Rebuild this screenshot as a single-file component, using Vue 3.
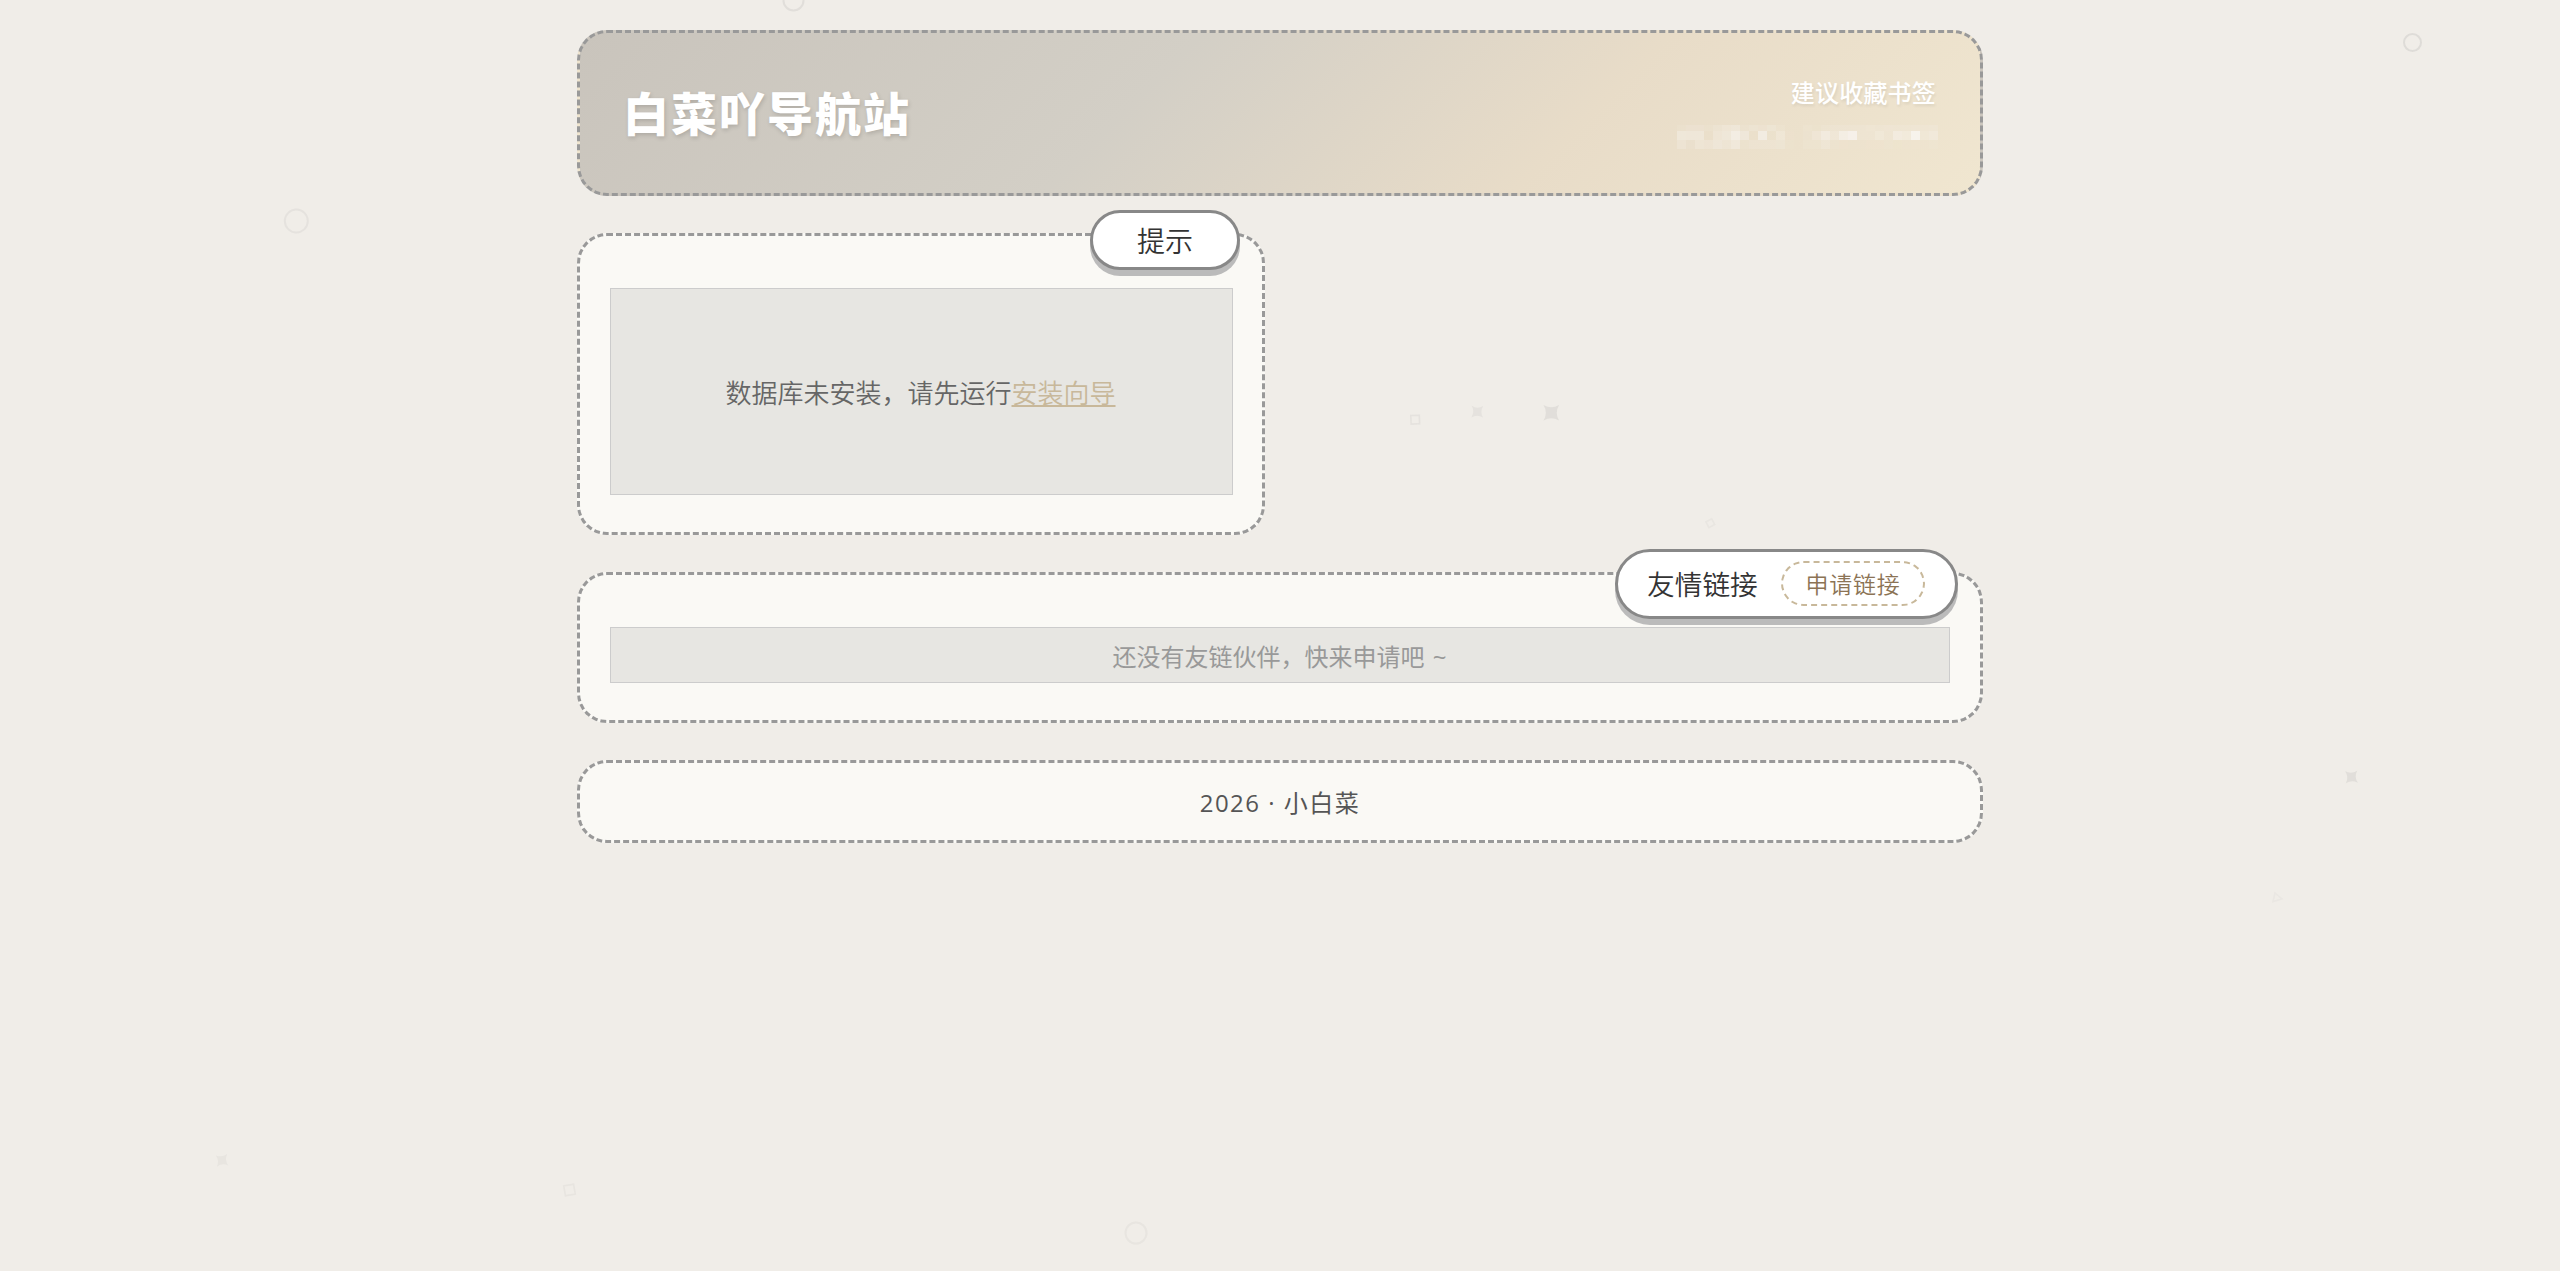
<template>
  <div class="page">
    <!-- Background shapes -->
    <svg class="shapes" width="2560" height="1271" viewBox="0 0 2560 1271" aria-hidden="true">
      <circle
        v-for="(c, i) in circles"
        :key="'c' + i"
        :cx="c.x"
        :cy="c.y"
        :r="c.r"
        :opacity="c.opacity"
        class="outline"
      />
      <rect
        v-for="(s, i) in squares"
        :key="'s' + i"
        :x="-s.size / 2"
        :y="-s.size / 2"
        :width="s.size"
        :height="s.size"
        :transform="`translate(${s.x} ${s.y}) rotate(${s.rotate})`"
        :opacity="s.opacity"
        class="outline thin"
      />
      <path
        v-for="(s, i) in stars"
        :key="'t' + i"
        d="M-10 -10Q0 -4 10 -10Q4 0 10 10Q0 4 -10 10Q-4 0 -10 -10Z"
        :transform="`translate(${s.x} ${s.y}) rotate(${s.rotate}) scale(${s.scale})`"
        :opacity="s.opacity"
        class="solid"
      />
      <path d="M2275 893L2282 899L2273 901.500Z" opacity="0.05" class="outline thin" />
    </svg>

    <div class="container">
      <header class="header">
        <h1 class="site-title">白菜吖导航站</h1>
        <div class="header-info">
          <p class="info-line">建议收藏书签</p>
          <div class="mosaic">
            <span
              v-for="(alpha, i) in mosaic"
              :key="i"
              :style="{ backgroundColor: `rgba(247, 244, 240, ${alpha})` }"
            ></span>
          </div>
        </div>
      </header>

      <section class="card tip-card">
        <div class="card-label">提示</div>
        <div class="panel tip-panel">
          <p>数据库未安装，请先运行<a href="#" class="link">安装向导</a></p>
        </div>
      </section>

      <section class="card">
        <div class="card-label links-label">
          <span>友情链接</span>
          <a href="#" class="apply-btn">申请链接</a>
        </div>
        <div class="panel links-panel">还没有友链伙伴，快来申请吧 ~</div>
      </section>

      <footer class="card footer">2026 · 小白菜</footer>
    </div>
  </div>
</template>

<script setup>
const circles = [
  { x: 793.5, y: 0.5, r: 10, opacity: 0.14 },
  { x: 296.3, y: 221, r: 11.5, opacity: 0.1 },
  { x: 2412.5, y: 42.5, r: 8.5, opacity: 0.17 },
  { x: 1136, y: 1233, r: 10.5, opacity: 0.08 }
]

const squares = [
  { x: 1415.2, y: 419.7, size: 8.5, rotate: -2, opacity: 0.1 },
  { x: 1710.3, y: 523.2, size: 6.5, rotate: -28, opacity: 0.07 },
  { x: 569.5, y: 1190, size: 10, rotate: -10, opacity: 0.08 }
]

const stars = [
  { x: 1477.3, y: 411.7, scale: 0.58, rotate: 1, opacity: 0.1 },
  { x: 1551.3, y: 412.8, scale: 0.78, rotate: 0, opacity: 0.14 },
  { x: 2351.5, y: 777, scale: 0.6, rotate: -3, opacity: 0.14 },
  { x: 222, y: 1160.3, scale: 0.58, rotate: -6, opacity: 0.08 }
]

// Three rows of 29 cells
const mosaic = [
  0.1, 0.15, 0.15, 0.1, 0.2, 0.3, 0.35, 0.12, 0.2, 0.15, 0.22, 0.1, 0, 0, 0.1, 0.04, 0.12, 0.14, 0.14, 0.14, 0.14, 0.18, 0.14, 0.16, 0.14, 0.14, 0.16, 0.14, 0.16,
  0.4, 0.38, 0.38, 0, 0.3, 0.38, 0.65, 0.36, 0, 0.6, 0.04, 0.3, 0.05, 0, 0.08, 0.25, 0.5, 0.28, 0.65, 0.8, 0.15, 0.15, 0.3, 0.15, 0.5, 0.4, 0.9, 0.25, 0.35,
  0.25, 0.08, 0.28, 0.24, 0.34, 0.26, 0.4, 0.1, 0.18, 0.18, 0.18, 0.2, 0.04, 0, 0.1, 0.1, 0.24, 0.08, 0.06, 0.03, 0.03, 0.06, 0.06, 0.08, 0.04, 0.05, 0.06, 0.05, 0.08
]
</script>

<style>
body {
  background: #f0ede8;
}
</style>

<style scoped>
.page {
  position: relative;
  min-height: 1271px;
  box-sizing: border-box;
  padding-top: 30px;
  overflow: hidden;
  background: #f0ede8;
  color: #333;
  font-family: "Noto Sans CJK SC", sans-serif;
  font-weight: 350;
}

.shapes {
  position: absolute;
  top: 0;
  left: 0;
}

.outline {
  fill: none;
  stroke: #888;
  stroke-width: 2;
}

.outline.thin {
  stroke-width: 1.6;
}

.solid {
  fill: #888;
}

.container {
  position: relative;
  width: 1406px;
  margin: 0 auto;
  display: flex;
  flex-direction: column;
}

.header {
  box-sizing: border-box;
  height: 166px;
  padding: 0 42px 0 43px;
  border: 3px dashed #999;
  border-radius: 30px;
  background: linear-gradient(135deg, #c9c4bc 0%, #d3cfc6 40%, #e8dcc8 70%, #f0e6d0 100%);
  display: flex;
  align-items: center;
  justify-content: space-between;
  color: #fff;
}

.site-title {
  margin: 0 0 5px;
  font-size: 46px;
  line-height: 66px;
  font-weight: 800;
  letter-spacing: 2px;
  text-shadow: 1px 2px 4px rgba(0, 0, 0, 0.15);
}

.header-info {
  display: flex;
  flex-direction: column;
  align-items: flex-end;
}

.info-line {
  margin: 0 2px 0 0;
  font-size: 24px;
  line-height: 43px;
  font-weight: 500;
  letter-spacing: 0.2px;
  text-shadow: 1px 2px 3px rgba(0, 0, 0, 0.08);
}

.mosaic {
  display: grid;
  grid-template-columns: repeat(29, 9px);
  grid-template-rows: 6px 9px 9px;
  margin: 12px 0 7px;
}

.card {
  position: relative;
  box-sizing: border-box;
  margin-top: 37px;
  padding: 52px 30px 37px;
  border: 3px dashed #999;
  border-radius: 30px;
  background: #faf9f5;
}

.tip-card {
  width: 688px;
}

.card-label {
  position: absolute;
  top: -26px;
  right: 22px;
  box-sizing: border-box;
  width: 150px;
  height: 60px;
  border: 3px solid #888;
  border-radius: 30px;
  background: #fff;
  box-shadow: 0 6px 0 #bbb;
  display: flex;
  align-items: center;
  justify-content: center;
  font-size: 28px;
  color: #333;
}

.links-label {
  top: -26px;
  width: 343px;
  height: 70px;
  border-radius: 35px;
  padding: 0 30px 2px 29px;
  justify-content: space-between;
  font-size: 27.7px;
}

.apply-btn {
  box-sizing: border-box;
  width: 144px;
  height: 45px;
  border: 2px dashed #c8b89a;
  border-radius: 23px;
  color: #8b7355;
  font-size: 23px;
  line-height: 41px;
  letter-spacing: 0.7px;
  text-align: center;
  text-decoration: none;
}

.panel {
  box-sizing: border-box;
  border: 1px solid #ccc;
  background: #e7e6e2;
  display: flex;
  align-items: center;
  justify-content: center;
}

.tip-panel {
  height: 207px;
  margin-right: -1px;
  padding-right: 2px;
  font-size: 26px;
  color: #666;
}

.tip-panel p {
  margin: 0;
}

.link {
  color: #c8b89a;
}

.links-panel {
  height: 56px;
  padding-right: 1px;
  font-family: "Noto Sans", "Noto Sans CJK SC", sans-serif;
  font-size: 24px;
  font-weight: 400;
  word-spacing: 2px;
  color: #999;
}

.footer {
  height: 83px;
  padding: 0;
  display: flex;
  align-items: center;
  justify-content: center;
  font-family: "Open Sans", "Noto Sans CJK SC", sans-serif;
  font-size: 24px;
  font-weight: 400;
  letter-spacing: 1.5px;
  color: #555;
}
</style>
